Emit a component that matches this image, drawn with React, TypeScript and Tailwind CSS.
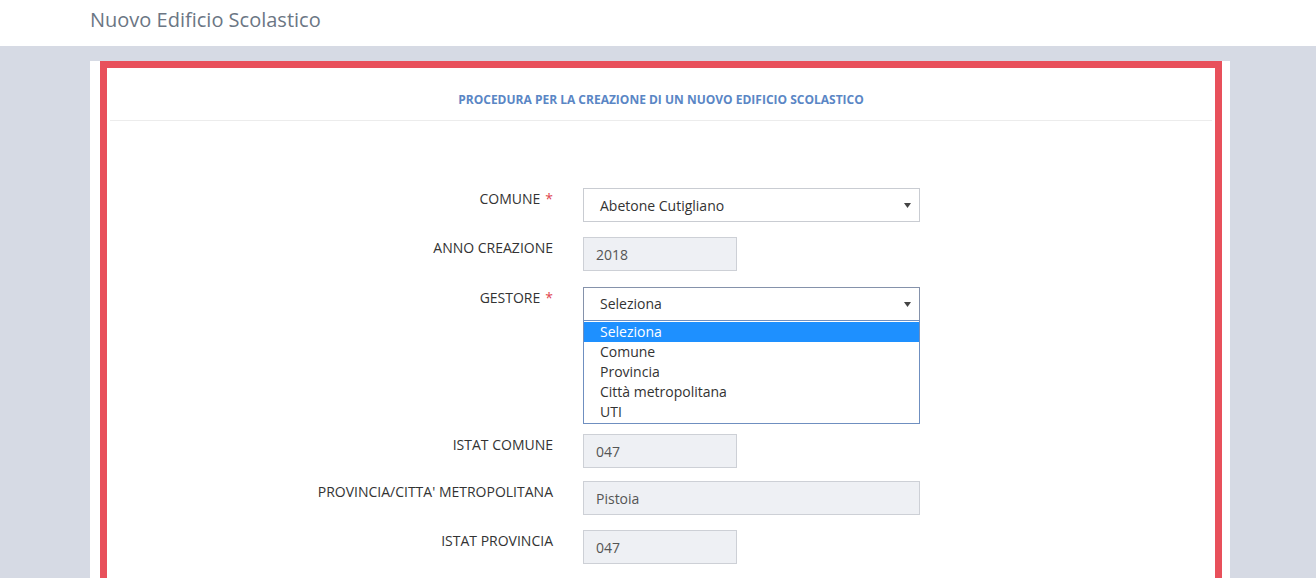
import React from 'react';

const font = { fontFamily: '"Open Sans", "Noto Sans", Arial, sans-serif' };

const Caret = () => (
  <svg width="7" height="5" viewBox="0 0 7 5" className="absolute right-[8px] top-[14px]">
    <path d="M0 0 L7 0 L3.5 5 Z" fill="#444" />
  </svg>
);

const Label = ({ text, required }: { text: string; required?: boolean }) => (
  <div className="w-[446px] shrink-0 pt-[1px] text-right text-[14px] leading-[20px] text-[#333]">
    {text}
    {required && <span className="ml-[5px] text-[#e0464f]">*</span>}
  </div>
);

const ReadOnly = ({ value, wide }: { value: string; wide?: boolean }) => (
  <div
    className={`${wide ? 'w-[337px]' : 'w-[154px]'} h-[34px] border border-[#cdd0d6] bg-[#eef0f4] pl-[12px] pt-[7px] text-[14px] leading-[20px] text-[#555]`}
  >
    {value}
  </div>
);

const options = ['Seleziona', 'Comune', 'Provincia', 'Città metropolitana', 'UTI'];

export default function App() {
  return (
    <div className="h-[578px] w-full overflow-hidden bg-[#d6dae4]" style={font}>
      {/* Top bar */}
      <div className="h-[46px] bg-white pl-[90px] pt-[6px]">
        <div className="text-[20px] leading-[28px] text-[#6b7684]">Nuovo Edificio Scolastico</div>
      </div>

      <div className="pl-[90px] pt-[15px]">
        <div className="h-[600px] w-[1140px] bg-white pl-[10px]">
          <div className="h-[600px] w-[1122px] border-[7px] border-[#e8505b]">
            {/* Panel heading */}
            <div className="mx-[3px] border-b border-[#ececec] pt-[23px] pb-[12px] text-center text-[12px] font-bold leading-[17px] text-[#5a86c5]">
              PROCEDURA PER LA CREAZIONE DI UN NUOVO EDIFICIO SCOLASTICO
            </div>

            <div className="pt-[67px]">
              {/* Comune */}
              <div className="mb-[15px] flex gap-[30px]">
                <Label text="COMUNE" required />
                <div className="relative h-[34px] w-[337px] border border-[#c9ccd2] bg-white pl-[16px] pt-[7px] text-[14px] leading-[20px] text-[#333]">
                  Abetone Cutigliano
                  <Caret />
                </div>
              </div>

              {/* Anno */}
              <div className="mb-[16px] flex gap-[30px]">
                <Label text="ANNO CREAZIONE" />
                <ReadOnly value="2018" />
              </div>

              {/* Gestore */}
              <div className="mb-[113px] flex gap-[30px]">
                <Label text="GESTORE" required />
                <div className="relative h-[34px] w-[337px]">
                  <div className="relative h-[34px] border border-[#8592ab] bg-white pl-[16px] pt-[6px] text-[14px] leading-[20px] text-[#333]">
                    Seleziona
                    <Caret />
                  </div>
                  <div className="absolute left-0 top-[33px] z-10 w-[337px] border border-[#6f8fc0] bg-white py-[1px] text-[14px] leading-[20px] text-[#333]">
                    {options.map((o, i) => (
                      <div key={o} className={`pl-[16px] ${i === 0 ? 'bg-[#1e90ff] text-white' : ''}`}>
                        {o}
                      </div>
                    ))}
                  </div>
                </div>
              </div>

              {/* Istat comune */}
              <div className="mb-[13px] flex gap-[30px]">
                <Label text="ISTAT COMUNE" />
                <ReadOnly value="047" />
              </div>

              {/* Provincia */}
              <div className="mb-[15px] flex gap-[30px]">
                <Label text="PROVINCIA/CITTA' METROPOLITANA" />
                <ReadOnly value="Pistoia" wide />
              </div>

              {/* Istat provincia */}
              <div className="flex gap-[30px]">
                <Label text="ISTAT PROVINCIA" />
                <ReadOnly value="047" />
              </div>
            </div>
          </div>
        </div>
      </div>
    </div>
  );
}
